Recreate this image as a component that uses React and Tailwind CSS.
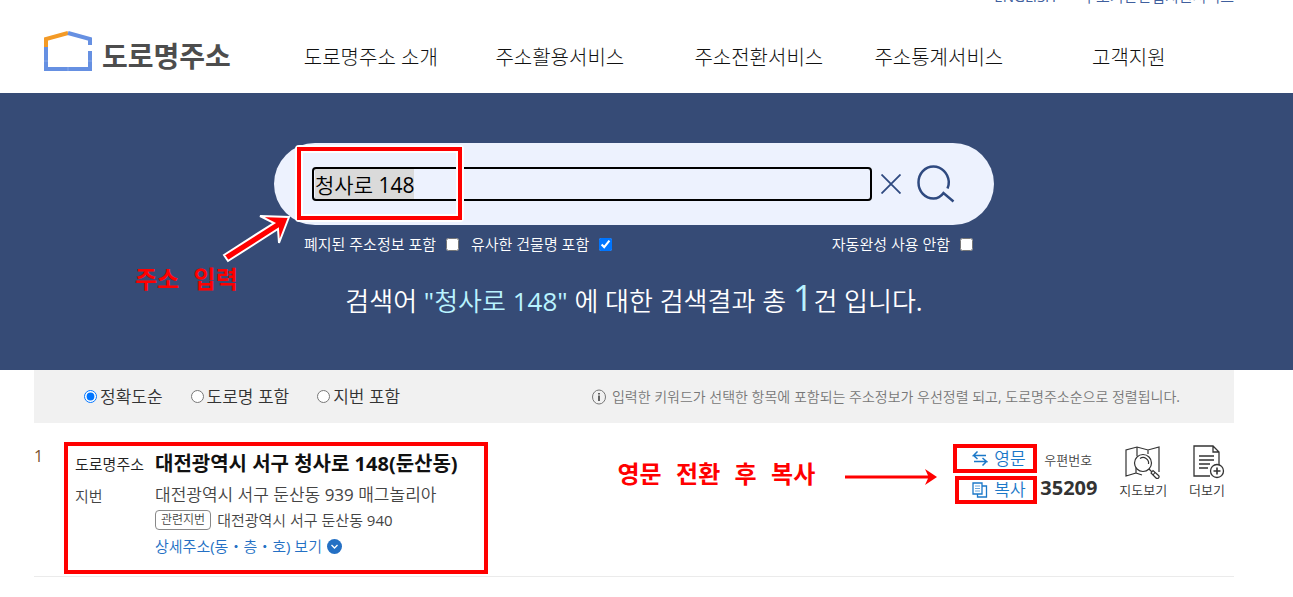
import React, { useState } from "react";

const navItems = [
  { label: "도로명주소 소개", width: "w-[186px]" },
  { label: "주소활용서비스", width: "w-[192px]" },
  { label: "주소전환서비스", width: "w-[206px]" },
  { label: "주소통계서비스", width: "w-[154px]" },
  { label: "고객지원", width: "w-[226px]" },
];

const sortOptions = [
  { id: "accuracy", label: "정확도순" },
  { id: "road", label: "도로명 포함" },
  { id: "jibun", label: "지번 포함" },
];

const LogoIcon = () => (
  <svg width="48" height="41" viewBox="0 0 48 41" fill="none" strokeWidth="4">
    <path d="M2 17V8L24 2" stroke="#f39a26" />
    <path d="M24 2L46 8V14" stroke="#6690e2" />
    <path d="M2 16V38H46V20" stroke="#6690e2" />
    <path d="M0 30H4M24 36V40M44 30H48" stroke="#86a8ea" strokeWidth="1" />
  </svg>
);

const SearchIcon = () => (
  <svg width="38" height="38" viewBox="0 0 38 38" fill="none" stroke="#2f4a80" strokeWidth="2.5">
    <path d="M30.5 23.5C31.5 21 32 19 31.8 16.5C31 8 24.5 1.5 16.500 1.5C8 1.5 1.5 8.500 1.5 17.500C1.5 26.500 8 33.500 16.500 33.500C20.500 33.500 24 31.500 26.500 28L36.500 36.500" />
  </svg>
);

const CloseIcon = () => (
  <svg width="20" height="20" viewBox="0 0 20 20" fill="none" stroke="#2f4a80" strokeWidth="1.8">
    <path d="M0.500 0.500L19.500 19.500M19.500 0.500L0.500 19.500" />
  </svg>
);

const InfoIcon = () => (
  <svg width="14" height="16" viewBox="0 0 14 16" fill="none">
    <ellipse cx="7" cy="8" rx="6.5" ry="7" stroke="#777" />
    <path d="M7 6.500V12M7 4V5.500" stroke="#333" strokeWidth="1.500" />
  </svg>
);

const SwapIcon = () => (
  <svg width="16" height="15" viewBox="0 0 16 15" fill="none" stroke="#1b78c8" strokeWidth="1.500">
    <path d="M5.500 0.500L1.500 4.500H14M1.500 4.500L5.500 8M2 10.500H14.500L10.500 7M14.500 10.500L10.500 14.500" />
  </svg>
);

const CopyIcon = () => (
  <svg width="16" height="16" viewBox="0 0 16 16" fill="none" stroke="#1b78c8">
    <path d="M1 1H10V12H1Z" strokeWidth="1.300" />
    <path d="M3 4H8M3 6.500H8M3 9H8" stroke="#6aa6dc" />
    <path d="M10 4H14.500V15H5.500V12" strokeWidth="1.300" />
  </svg>
);

const MapIcon = () => (
  <svg width="36" height="34" viewBox="0 0 36 34" fill="none" stroke="#333" strokeWidth="1.200">
    <path d="M11 28L1 31V5L12 2L23 5L34 2V27M12 2V11M23 5V9M11 28L17 30M11 28V22" />
    <circle cx="18" cy="18" r="8.500" fill="#fff" />
    <path d="M15 13.500A5.500 5.500 0 0 1 23.500 19" />
    <path d="M24 24L26.500 26.500M26 28L28 25.500L33.500 30.500A1.700 1.700 0 0 1 31 33ZM28 30L30 27.500" />
  </svg>
);

const MoreIcon = () => (
  <svg width="32" height="34" viewBox="0 0 32 34" fill="none" stroke="#333" strokeWidth="1.300">
    <path d="M17 31H1V1H20L26 7V20M20 1V7H26M6 11H21M6 15H21M6 19H17M6 23H15" />
    <circle cx="24" cy="26" r="6.500" fill="#fff" />
    <path d="M24 22.500V29.500M20.500 26H27.500" strokeWidth="1.600" />
  </svg>
);

const ChevronIcon = () => (
  <svg width="15" height="15" viewBox="0 0 15 15" fill="none">
    <circle cx="7.500" cy="7.500" r="7.500" fill="#2470c4" />
    <path d="M4.500 6L7.500 9L10.500 6" stroke="#fff" strokeWidth="1.300" />
  </svg>
);

const Header = () => (
  <header className="h-[93px] overflow-hidden pl-[34px] pr-[59px]">
    <div className="flex h-[6px] items-end justify-end gap-[26px] text-[15px] leading-[20px] text-[#3f5f9e]">
      <a href="#english">ENGLISH</a>
      <a href="#business">주소기반산업지원서비스</a>
    </div>
    <div className="flex items-start pt-[25px]">
      <a href="#home" className="ml-[10px] flex shrink-0 items-start gap-[10px]">
        <LogoIcon />
        <span className="pt-[2px] font-['Noto_Sans_CJK_KR',sans-serif] text-[28px] font-bold leading-[44px] text-[#4d4d4d]">
          도로명주소
        </span>
      </a>
      <nav className="ml-[47px] flex pt-[13px]">
        {navItems.map((item) => (
          <a
            key={item.label}
            href="#menu"
            className={`${item.width} whitespace-nowrap text-center font-['Open_Sans','Noto_Sans_CJK_KR',sans-serif] text-[20px] font-light leading-[28px] text-[#111]`}
          >
            {item.label}
          </a>
        ))}
      </nav>
    </div>
  </header>
);

const SearchSection = () => {
  const [keyword, setKeyword] = useState("청사로 148");
  const [closed, setClosed] = useState(false);
  const [similar, setSimilar] = useState(true);
  const [noAuto, setNoAuto] = useState(false);

  return (
    <section className="bg-[#364b76] pb-[44px] pl-[34px] pr-[59px] pt-[50px] text-white">
      <div className="relative mx-auto max-w-[720px]">
        <form
          onSubmit={(e) => e.preventDefault()}
          className="flex h-[82px] items-center rounded-full bg-[#edf2fe] pl-[38px] pr-[39px]"
        >
          <div className="relative min-w-0 flex-1">
            <span className="absolute left-[3px] top-[2px] whitespace-pre bg-[#dadada] text-[21px] leading-[30px] text-transparent">
              {keyword}
            </span>
            <input
              type="text"
              aria-label="주소 검색"
              value={keyword}
              onChange={(e) => setKeyword(e.target.value)}
              className="relative block h-[34px] w-full rounded border-2 border-black bg-transparent px-px text-[21px] leading-[30px] text-black outline-none"
            />
          </div>
          <button type="button" aria-label="지우기" onClick={() => setKeyword("")} className="ml-[9px]">
            <CloseIcon />
          </button>
          <button type="submit" aria-label="검색" className="ml-[16px]">
            <SearchIcon />
          </button>
        </form>

        <div className="mt-[9px] flex items-center pl-[30px] pr-[21px] text-[15px] leading-[20px]">
          <label className="flex items-center gap-[10px]">
            폐지된 주소정보 포함
            <input type="checkbox" checked={closed} onChange={(e) => setClosed(e.target.checked)} />
          </label>
          <label className="ml-[12px] flex items-center gap-[10px]">
            유사한 건물명 포함
            <input type="checkbox" checked={similar} onChange={(e) => setSimilar(e.target.checked)} />
          </label>
          <label className="ml-auto flex items-center gap-[10px]">
            자동완성 사용 안함
            <input type="checkbox" checked={noAuto} onChange={(e) => setNoAuto(e.target.checked)} />
          </label>
        </div>

        {/* guide box around the keyword */}
        <div className="pointer-events-none absolute left-[21px] top-[2px] h-[77px] w-[169px] rounded-sm border-2 border-white">
          <div className="h-full border-4 border-[#f00]">
            <div className="h-full border-2 border-white" />
          </div>
        </div>
        <svg
          className="pointer-events-none absolute left-[-54px] top-[68px]"
          width="72"
          height="54"
          viewBox="0 0 72 54"
        >
          <path
            d="M4 44L54 12L40 5L69 6L59 32L58 18L8 50Z"
            fill="#f00"
            stroke="#fff"
            strokeWidth="2"
          />
        </svg>
        <p className="pointer-events-none absolute left-[-139px] top-[123px] font-['Liberation_Mono','Noto_Sans_CJK_KR',monospace] text-[24px] font-bold leading-[32px] text-[#f00]">
          주소 입력
        </p>
      </div>

      <p className="mt-[19px] text-center text-[26px] leading-[50px]">
        검색어 <span className="text-[#b9f3ff]">"청사로 148"</span> 에 대한 검색결과 총{" "}
        <span className="text-[36px] text-[#b9f3ff]">1</span>건 입니다.
      </p>
    </section>
  );
};

const SortBar = () => {
  const [sort, setSort] = useState("accuracy");

  return (
    <div className="flex h-[53px] items-center bg-[#f1f1f1] pl-[50px] pr-[54px]">
      <div className="flex gap-[28px] text-[17px] leading-[24px] text-[#333]">
        {sortOptions.map((option) => (
          <label key={option.id} className="flex items-center gap-[3px]">
            <input
              type="radio"
              name="sort"
              checked={sort === option.id}
              onChange={() => setSort(option.id)}
            />
            {option.label}
          </label>
        ))}
      </div>
      <p className="ml-auto flex items-center gap-[6px] text-[14px] leading-[20px] text-[#777]">
        <InfoIcon />
        입력한 키워드가 선택한 항목에 포함되는 주소정보가 우선정렬 되고, 도로명주소순으로 정렬됩니다.
      </p>
    </div>
  );
};

const ResultRow = () => (
  <article className="flex h-[154px] items-start border-b border-[#ebebeb] pt-[19px]">
    <span className="w-[30px] pt-[4px] text-[16px] leading-[20px] text-[#7a5230]">1</span>
    <div className="h-[132px] w-[424px] shrink-0 border-4 border-[#f00] pl-[7px] pt-[2px]">
      <dl className="grid grid-cols-[80px_1fr] text-[15px] text-[#444]">
        <dt className="leading-[32px] text-[#222]">도로명주소</dt>
        <dd className="whitespace-nowrap font-['Open_Sans','Noto_Sans_CJK_KR',sans-serif] text-[20px] font-bold leading-[32px] text-[#111]">
          대전광역시 서구 청사로 148(둔산동)
        </dd>
        <dt className="leading-[32px]">지번</dt>
        <dd>
          <p className="text-[17px] leading-[30px]">대전광역시 서구 둔산동 939 매그놀리아</p>
          <p className="flex items-center gap-[6px] leading-[20px]">
            <span className="h-[20px] rounded-sm border border-[#888] px-[5px] text-[12px] leading-[18px]">
              관련지번
            </span>
            대전광역시 서구 둔산동 940
          </p>
          <button type="button" className="flex items-center gap-[5px] leading-[32px] text-[#2470c4]">
            상세주소(동・층・호) 보기
            <ChevronIcon />
          </button>
        </dd>
      </dl>
    </div>

    <div className="ml-auto flex items-start gap-[30px] pt-[19px]">
      <p className="font-['Liberation_Mono','Noto_Sans_CJK_KR',monospace] text-[24px] font-bold leading-[32px] text-[#f00]">
        영문 전환 후 복사
      </p>
      <svg className="mt-[8px]" width="92" height="16" viewBox="0 0 92 16" fill="#f00">
        <path d="M0 6.500H83L80 0L92 8L80 16L83 9.500H0Z" />
      </svg>
    </div>

    <div className="ml-[16px] flex w-[84px] flex-col gap-[3px] pt-[2px] text-[17px] leading-[20px] text-[#1b78c8]">
      <button type="button" className="flex h-[29px] items-center gap-[6px] border-4 border-[#f00] pl-[15px]">
        <SwapIcon />
        영문
      </button>
      <button type="button" className="ml-[2px] flex h-[28px] items-center gap-[6px] border-4 border-[#f00] pl-[13px]">
        <CopyIcon />
        복사
      </button>
    </div>
    <div className="w-[60px] pl-[3px] pt-[8px]">
      <p className="pl-[4px] text-[13px] leading-[20px] text-[#444]">우편번호</p>
      <p className="pt-[6px] text-[20px] font-bold leading-[24px] text-[#333]">35209</p>
    </div>
    <button type="button" className="ml-[22px] flex flex-col items-center gap-px pt-[3px] text-[13px] leading-[20px] text-[#333]">
      <MapIcon />
      지도보기
    </button>
    <button type="button" className="ml-[22px] mr-[9px] flex flex-col items-end gap-px pt-[3px] text-[13px] leading-[20px] text-[#333]">
      <MoreIcon />
      더보기
    </button>
  </article>
);

const App = () => (
  <div className="bg-white font-['Open_Sans','Noto_Sans_CJK_KR_DemiLight','Noto_Sans_CJK_KR',sans-serif]">
    <Header />
    <SearchSection />
    <main className="pl-[34px] pr-[59px]">
      <SortBar />
      <ResultRow />
    </main>
  </div>
);

export default App;
